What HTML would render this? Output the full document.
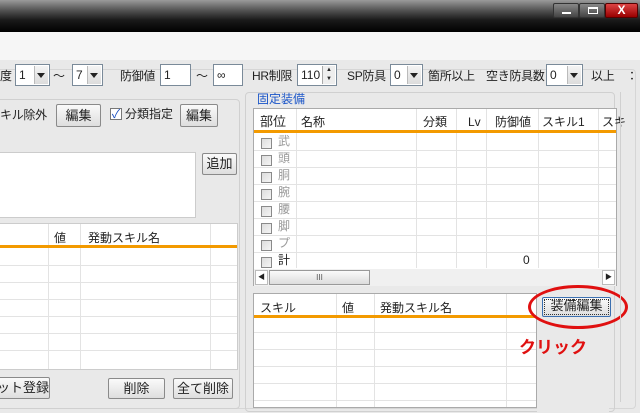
<!DOCTYPE html>
<html><head><meta charset="utf-8"><style>
*{box-sizing:border-box;margin:0;padding:0}
body{width:640px;height:400px;overflow:hidden;background:#e9e9e9;font-family:"Liberation Sans","Noto Sans CJK JP",sans-serif;font-size:12px;color:#222;position:relative}
.a{position:absolute;white-space:nowrap}
.t{line-height:14px}
.r1{font-size:12px;letter-spacing:-0.3px}
.sel{position:absolute;height:22px;background:#fff;border:1px solid #7a8a99;font-size:12px;padding:3px 3px;line-height:14px}
.sel .ar{position:absolute;right:1px;top:1px;width:14px;height:18px;background:linear-gradient(#f4f4f4,#dcdcdc);border-left:1px solid #bbb}
.sel .ar:after{content:"";position:absolute;left:2px;top:7px;border:4px solid transparent;border-top:5px solid #222}
.inp{position:absolute;height:22px;background:#fff;border:1px solid #7a8a99;padding:3px 3px;line-height:14px}
.btn{position:absolute;background:linear-gradient(#fafafa,#dedede);border:1px solid #8a8a8a;border-radius:2px;text-align:center;font-size:13px}
.grid{position:absolute;background:#fff;border:1px solid #aaa}
.hl{position:absolute;left:0;right:0;height:1px;background:#e3e3e3}
.vl{position:absolute;top:0;bottom:0;width:1px;background:#e3e3e3}
.cb{position:absolute;width:11px;height:11px;border:1px solid #8a8a8a;background:linear-gradient(135deg,#ddd,#f5f5f5)}
.g{color:#9a9a9a}
</style></head><body>
<div class="a" style="left:0;top:0;width:640px;height:32px;background:linear-gradient(#9a9a9a 0,#555 10px,#1a1a1a 20px,#000 32px)"></div>
<div class="a" style="left:553px;top:3px;width:26px;height:15px;background:linear-gradient(#888,#444);border:1px solid #333;border-radius:2px"><div class="a" style="left:8px;top:8px;width:9px;height:2px;background:#fff"></div></div>
<div class="a" style="left:579px;top:3px;width:26px;height:15px;background:linear-gradient(#888,#444);border:1px solid #333;border-radius:2px"><div class="a" style="left:8px;top:3px;width:10px;height:7px;border:1px solid #fff;border-top:2px solid #fff"></div></div>
<div class="a" style="left:605px;top:3px;width:33px;height:15px;background:linear-gradient(#d44,#900);border:1px solid #500;border-radius:2px;color:#fff;font-weight:bold;font-size:12px;text-align:center;line-height:13px">X</div>
<div class="a" style="left:0;top:32px;width:640px;height:28px;background:#f6f6f6"></div>
<div class="a" style="left:-4px;top:69px;width:640px;height:340px;border:1px solid #d6d6d6;border-radius:4px"></div>
<!-- row 1 -->
<div class="a t r1" style="left:0;top:69px">度</div>
<div class="sel" style="left:15px;top:64px;width:35px">1<div class="ar"></div></div>
<div class="a t r1" style="left:53px;top:69px">～</div>
<div class="sel" style="left:72px;top:64px;width:31px">7<div class="ar"></div></div>
<div class="a t r1" style="left:120px;top:69px">防御値</div>
<div class="inp" style="left:160px;top:64px;width:31px">1</div>
<div class="a t r1" style="left:196px;top:69px">～</div>
<div class="inp" style="left:213px;top:64px;width:30px">∞</div>
<div class="a t r1" style="left:252px;top:69px">HR制限</div>
<div class="inp" style="left:297px;top:64px;width:40px">110<div class="a" style="right:1px;top:1px;width:13px;height:18px;background:#eee;border-left:1px solid #aaa;font-size:6px;line-height:9px;text-align:center">▲<br>▼</div></div>
<div class="a t r1" style="left:347px;top:69px">SP防具</div>
<div class="sel" style="left:390px;top:64px;width:33px">0<div class="ar"></div></div>
<div class="a t r1" style="left:428px;top:69px">箇所以上</div>
<div class="a t r1" style="left:486px;top:69px">空き防具数</div>
<div class="sel" style="left:546px;top:64px;width:37px">0<div class="ar"></div></div>
<div class="a t r1" style="left:591px;top:69px">以上</div>
<div class="a t r1" style="left:626px;top:69px">：</div>
<!-- left panel -->
<div class="a" style="left:-6px;top:99px;width:246px;height:310px;border:1px solid #d0d0d0;border-radius:4px"></div>
<div class="a t r1" style="left:0;top:108px">キル除外</div>
<div class="btn" style="left:56px;top:104px;width:45px;height:23px;line-height:21px">編集</div>
<div class="a" style="left:110px;top:108px;width:12px;height:12px;border:1px solid #777;background:#fff;color:#1a4fc0;font-size:12px;line-height:10px;text-align:center">✓</div>
<div class="a t" style="left:125px;top:107px;font-size:12px">分類指定</div>
<div class="btn" style="left:180px;top:104px;width:38px;height:23px;line-height:21px">編集</div>
<div class="a" style="left:0;top:152px;width:196px;height:66px;background:#fff;border:1px solid #ccc;border-left:none"></div>
<div class="btn" style="left:202px;top:153px;width:35px;height:22px;line-height:20px">追加</div>
<div class="grid" style="left:-1px;top:223px;width:239px;height:147px;border-color:#ccc">
 <div class="vl" style="left:48px"></div><div class="vl" style="left:80px"></div><div class="vl" style="left:210px"></div>
 <div class="a t" style="left:54px;top:7px">値</div><div class="a t" style="left:88px;top:7px">発動スキル名</div>
 <div class="a" style="left:0;right:0;top:21px;height:3px;background:#f39a00"></div>
 <div class="hl" style="top:41px"></div><div class="hl" style="top:58px"></div><div class="hl" style="top:75px"></div><div class="hl" style="top:92px"></div><div class="hl" style="top:109px"></div><div class="hl" style="top:126px"></div>
</div>
<div class="btn" style="left:-4px;top:377px;width:54px;height:22px;line-height:20px">ット登録</div>
<div class="btn" style="left:108px;top:378px;width:57px;height:21px;line-height:19px">削除</div>
<div class="btn" style="left:173px;top:378px;width:60px;height:21px;line-height:19px">全て削除</div>
<!-- right panel -->
<div class="a" style="left:245px;top:92px;width:370px;height:320px;border:1px solid #d0d0d0;border-radius:4px"></div>
<div class="a t" style="left:257px;top:92px;color:#1a55c8">固定装備</div>
<div class="grid" style="left:253px;top:108px;width:364px;height:178px">
 <div class="vl" style="left:42px;bottom:17px"></div><div class="vl" style="left:162px;bottom:17px"></div><div class="vl" style="left:202px;bottom:17px"></div><div class="vl" style="left:232px;bottom:17px"></div><div class="vl" style="left:284px;bottom:17px"></div><div class="vl" style="left:344px;bottom:17px"></div>
 <div class="a t" style="left:6px;top:6px;font-size:13px">部位</div><div class="a t" style="left:47px;top:6px">名称</div><div class="a t" style="left:169px;top:6px">分類</div><div class="a t" style="left:214px;top:6px">Lv</div><div class="a t" style="left:241px;top:6px">防御値</div><div class="a t" style="left:288px;top:6px">スキル1</div><div class="a t" style="left:348px;top:6px">スキ</div>
 <div class="a" style="left:0;right:0;top:21px;height:3px;background:#f39a00"></div>
 <div class="hl" style="top:41px"></div><div class="hl" style="top:58px"></div><div class="hl" style="top:75px"></div><div class="hl" style="top:92px"></div><div class="hl" style="top:109px"></div><div class="hl" style="top:126px"></div><div class="hl" style="top:143px"></div><div class="hl" style="top:160px"></div>
 <div class="cb" style="left:7px;top:29px"></div><div class="a t g" style="left:24px;top:25px">武</div>
 <div class="cb" style="left:7px;top:46px"></div><div class="a t g" style="left:24px;top:42px">頭</div>
 <div class="cb" style="left:7px;top:63px"></div><div class="a t g" style="left:24px;top:59px">胴</div>
 <div class="cb" style="left:7px;top:80px"></div><div class="a t g" style="left:24px;top:76px">腕</div>
 <div class="cb" style="left:7px;top:97px"></div><div class="a t g" style="left:24px;top:93px">腰</div>
 <div class="cb" style="left:7px;top:114px"></div><div class="a t g" style="left:24px;top:110px">脚</div>
 <div class="cb" style="left:7px;top:131px"></div><div class="a t g" style="left:24px;top:127px">プ</div>
 <div class="cb" style="left:7px;top:148px"></div><div class="a t" style="left:24px;top:144px">計</div>
 <div class="a t" style="left:269px;top:144px">0</div>
 <div class="a" style="left:0;right:0;top:160px;height:17px;background:#f0f0f0">
  <div class="a" style="left:1px;top:1px;width:13px;height:15px;background:#fff;border:1px solid #bbb;font-size:7px;line-height:13px;text-align:center">◀</div>
  <div class="a" style="left:15px;top:1px;width:101px;height:15px;background:linear-gradient(#fafafa,#dcdcdc);border:1px solid #999;font-size:8px;text-align:center;line-height:13px;color:#555">III</div>
  <div class="a" style="right:1px;top:1px;width:13px;height:15px;background:#fff;border:1px solid #bbb;font-size:7px;line-height:13px;text-align:center">▶</div>
 </div>
</div>
<div class="a" style="left:253px;top:293px;width:284px;height:115px;background:#fff;border:1px solid #aaa">
 <div class="vl" style="left:82px"></div><div class="vl" style="left:120px"></div><div class="vl" style="left:252px"></div>
 <div class="a t" style="left:6px;top:7px">スキル</div><div class="a t" style="left:88px;top:7px">値</div><div class="a t" style="left:126px;top:7px">発動スキル名</div>
 <div class="a" style="left:0;right:0;top:21px;height:3px;background:#f39a00"></div>
 <div class="hl" style="top:38px"></div><div class="hl" style="top:55px"></div><div class="hl" style="top:72px"></div><div class="hl" style="top:89px"></div><div class="hl" style="top:106px"></div>
</div>
<div class="a" style="left:537px;top:293px;width:72px;height:120px;background:#e9e9e9"></div>
<div class="btn" style="left:542px;top:297px;width:69px;height:20px;line-height:16px;border-color:#3a6fb0;outline:1px dotted #333;outline-offset:-3px">装備編集</div>
<div class="a" style="left:528px;top:285px;width:100px;height:44px;border:3px solid #e01010;border-radius:50%"></div>
<div class="a" style="left:519px;top:337px;color:#e01010;font-weight:bold;font-size:17px;line-height:22px">クリック</div>
<div class="a" style="left:620px;top:92px;width:1px;height:310px;background:#d0d0d0"></div>
</body></html>
